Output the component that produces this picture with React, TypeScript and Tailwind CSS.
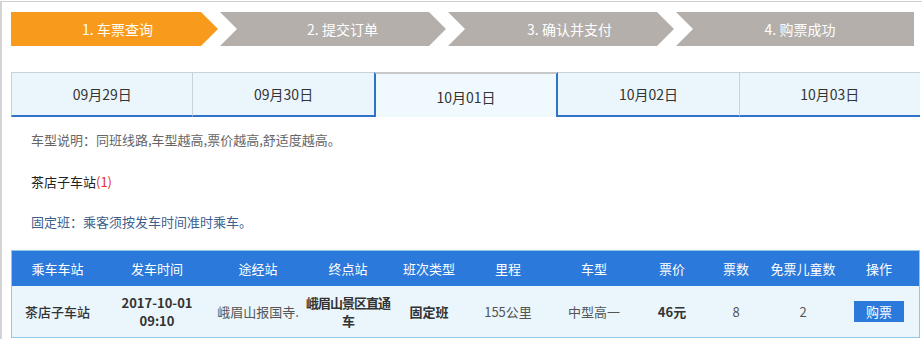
const font = { fontFamily: '"Noto Sans CJK SC", "Noto Sans", sans-serif' };

const steps = [
  { label: "1. 车票查询", active: true },
  { label: "2. 提交订单", active: false },
  { label: "3. 确认并支付", active: false },
  { label: "4. 购票成功", active: false },
];

const dates = ["09月29日", "09月30日", "10月01日", "10月02日", "10月03日"];

const columns = [
  "乘车车站",
  "发车时间",
  "途经站",
  "终点站",
  "班次类型",
  "里程",
  "车型",
  "票价",
  "票数",
  "免票儿童数",
  "操作",
];

const gridCols =
  "grid grid-cols-[91px_108px_94px_86px_76px_82px_90px_66px_62px_72px_80px]";

function StepBar() {
  return (
    <div className="flex w-[903px] gap-[2px] text-[14px] leading-[34px] text-white">
      <div className="h-[34px] w-[207px] bg-[#f89b1d] pl-[6px] text-center [clip-path:polygon(0_0,190px_0,207px_50%,190px_100%,0_100%)]">
        {steps[0].label}
      </div>
      <div className="h-[34px] w-[226px] bg-[#b4afab] pl-[19px] text-center [clip-path:polygon(0_0,209px_0,226px_50%,209px_100%,0_100%,17px_50%)]">
        {steps[1].label}
      </div>
      <div className="h-[34px] w-[226px] bg-[#b4afab] pl-[17px] text-center [clip-path:polygon(0_0,209px_0,226px_50%,209px_100%,0_100%,17px_50%)]">
        {steps[2].label}
      </div>
      <div className="h-[34px] flex-1 bg-[#b4afab] pl-[10px] text-center [clip-path:polygon(0_0,100%_0,100%_100%,0_100%,17px_50%)]">
        {steps[3].label}
      </div>
    </div>
  );
}

function DateTabs() {
  return (
    <div className="flex w-[909px] text-[14px] leading-[20px] text-[#333]">
      {dates.map((d, i) => {
        if (i === 2) {
          return (
            <div
              key={d}
              className="flex h-[45px] flex-1 justify-center border-x-2 border-t-2 border-x-[#2f73c9] border-t-[#c8c8c8] bg-[#f0f9fe] pt-[13px]"
            >
              {d}
            </div>
          );
        }
        return (
          <div
            key={d}
            className={
              "flex h-[45px] flex-1 justify-center border-t border-b-2 border-t-[#c9d2d8] border-b-[#2f73c9] bg-[#eaf6fc] pt-[4px] " +
              (i === 0 ? "border-l border-l-[#c9d2d8] " : "") +
              (i === 0 || i === 3 ? "border-r border-r-[#c9d2d8]" : "")
            }
          >
            <span className="leading-[34px]">{d}</span>
          </div>
        );
      })}
    </div>
  );
}

function Info() {
  return (
    <div className="px-[20px] text-[13px] leading-[20px]">
      <p className="mt-[13px] text-[#666]">
        车型说明：同班线路,车型越高,票价越高,舒适度越高。
      </p>
      <p className="mt-[22px] font-normal text-[#222]">
        茶店子车站<span className="text-[#e12f2f]">(1)</span>
      </p>
      <p className="mt-[20px] text-[#3d5f8e]">固定班：乘客须按发车时间准时乘车。</p>
    </div>
  );
}

function TicketTable() {
  return (
    <div className="mt-[18px] w-[909px] border border-[#90c8e8] text-[13px]">
      <div className={gridCols + " h-[35px] items-center bg-[#2b79da] text-center text-white"}>
        {columns.map((c) => (
          <div key={c}>{c}</div>
        ))}
      </div>
      <div className={gridCols + " h-[51px] items-center bg-[#eaf5fc] text-center leading-[18px] text-[#555]"}>
        <div className="font-medium text-[#333]">茶店子车站</div>
        <div className="font-bold text-[#333]">
          <div>2017-10-01</div>
          <div>09:10</div>
        </div>
        <div>峨眉山报国寺.</div>
        <div className="font-bold tracking-[-1px] text-[#333]">峨眉山景区直通车</div>
        <div className="font-bold text-[#333]">固定班</div>
        <div>155公里</div>
        <div>中型高一</div>
        <div className="font-bold text-[#333]">46元</div>
        <div>8</div>
        <div>2</div>
        <div className="flex justify-center">
          <button className="h-[21px] w-[50px] bg-[#2b79da] text-[13px] leading-[21px] text-white">
            购票
          </button>
        </div>
      </div>
    </div>
  );
}

export default function App() {
  return (
    <div className="min-h-screen bg-white" style={font}>
      <div className="min-h-[339px] border-l-2 border-[#d4d4d4]">
        <div className="mt-px border-t border-[#cfcfcf] pl-[9px] pt-[10px]">
          <StepBar />
          <div className="mt-[26px]">
            <DateTabs />
          </div>
          <Info />
          <TicketTable />
        </div>
      </div>
    </div>
  );
}
